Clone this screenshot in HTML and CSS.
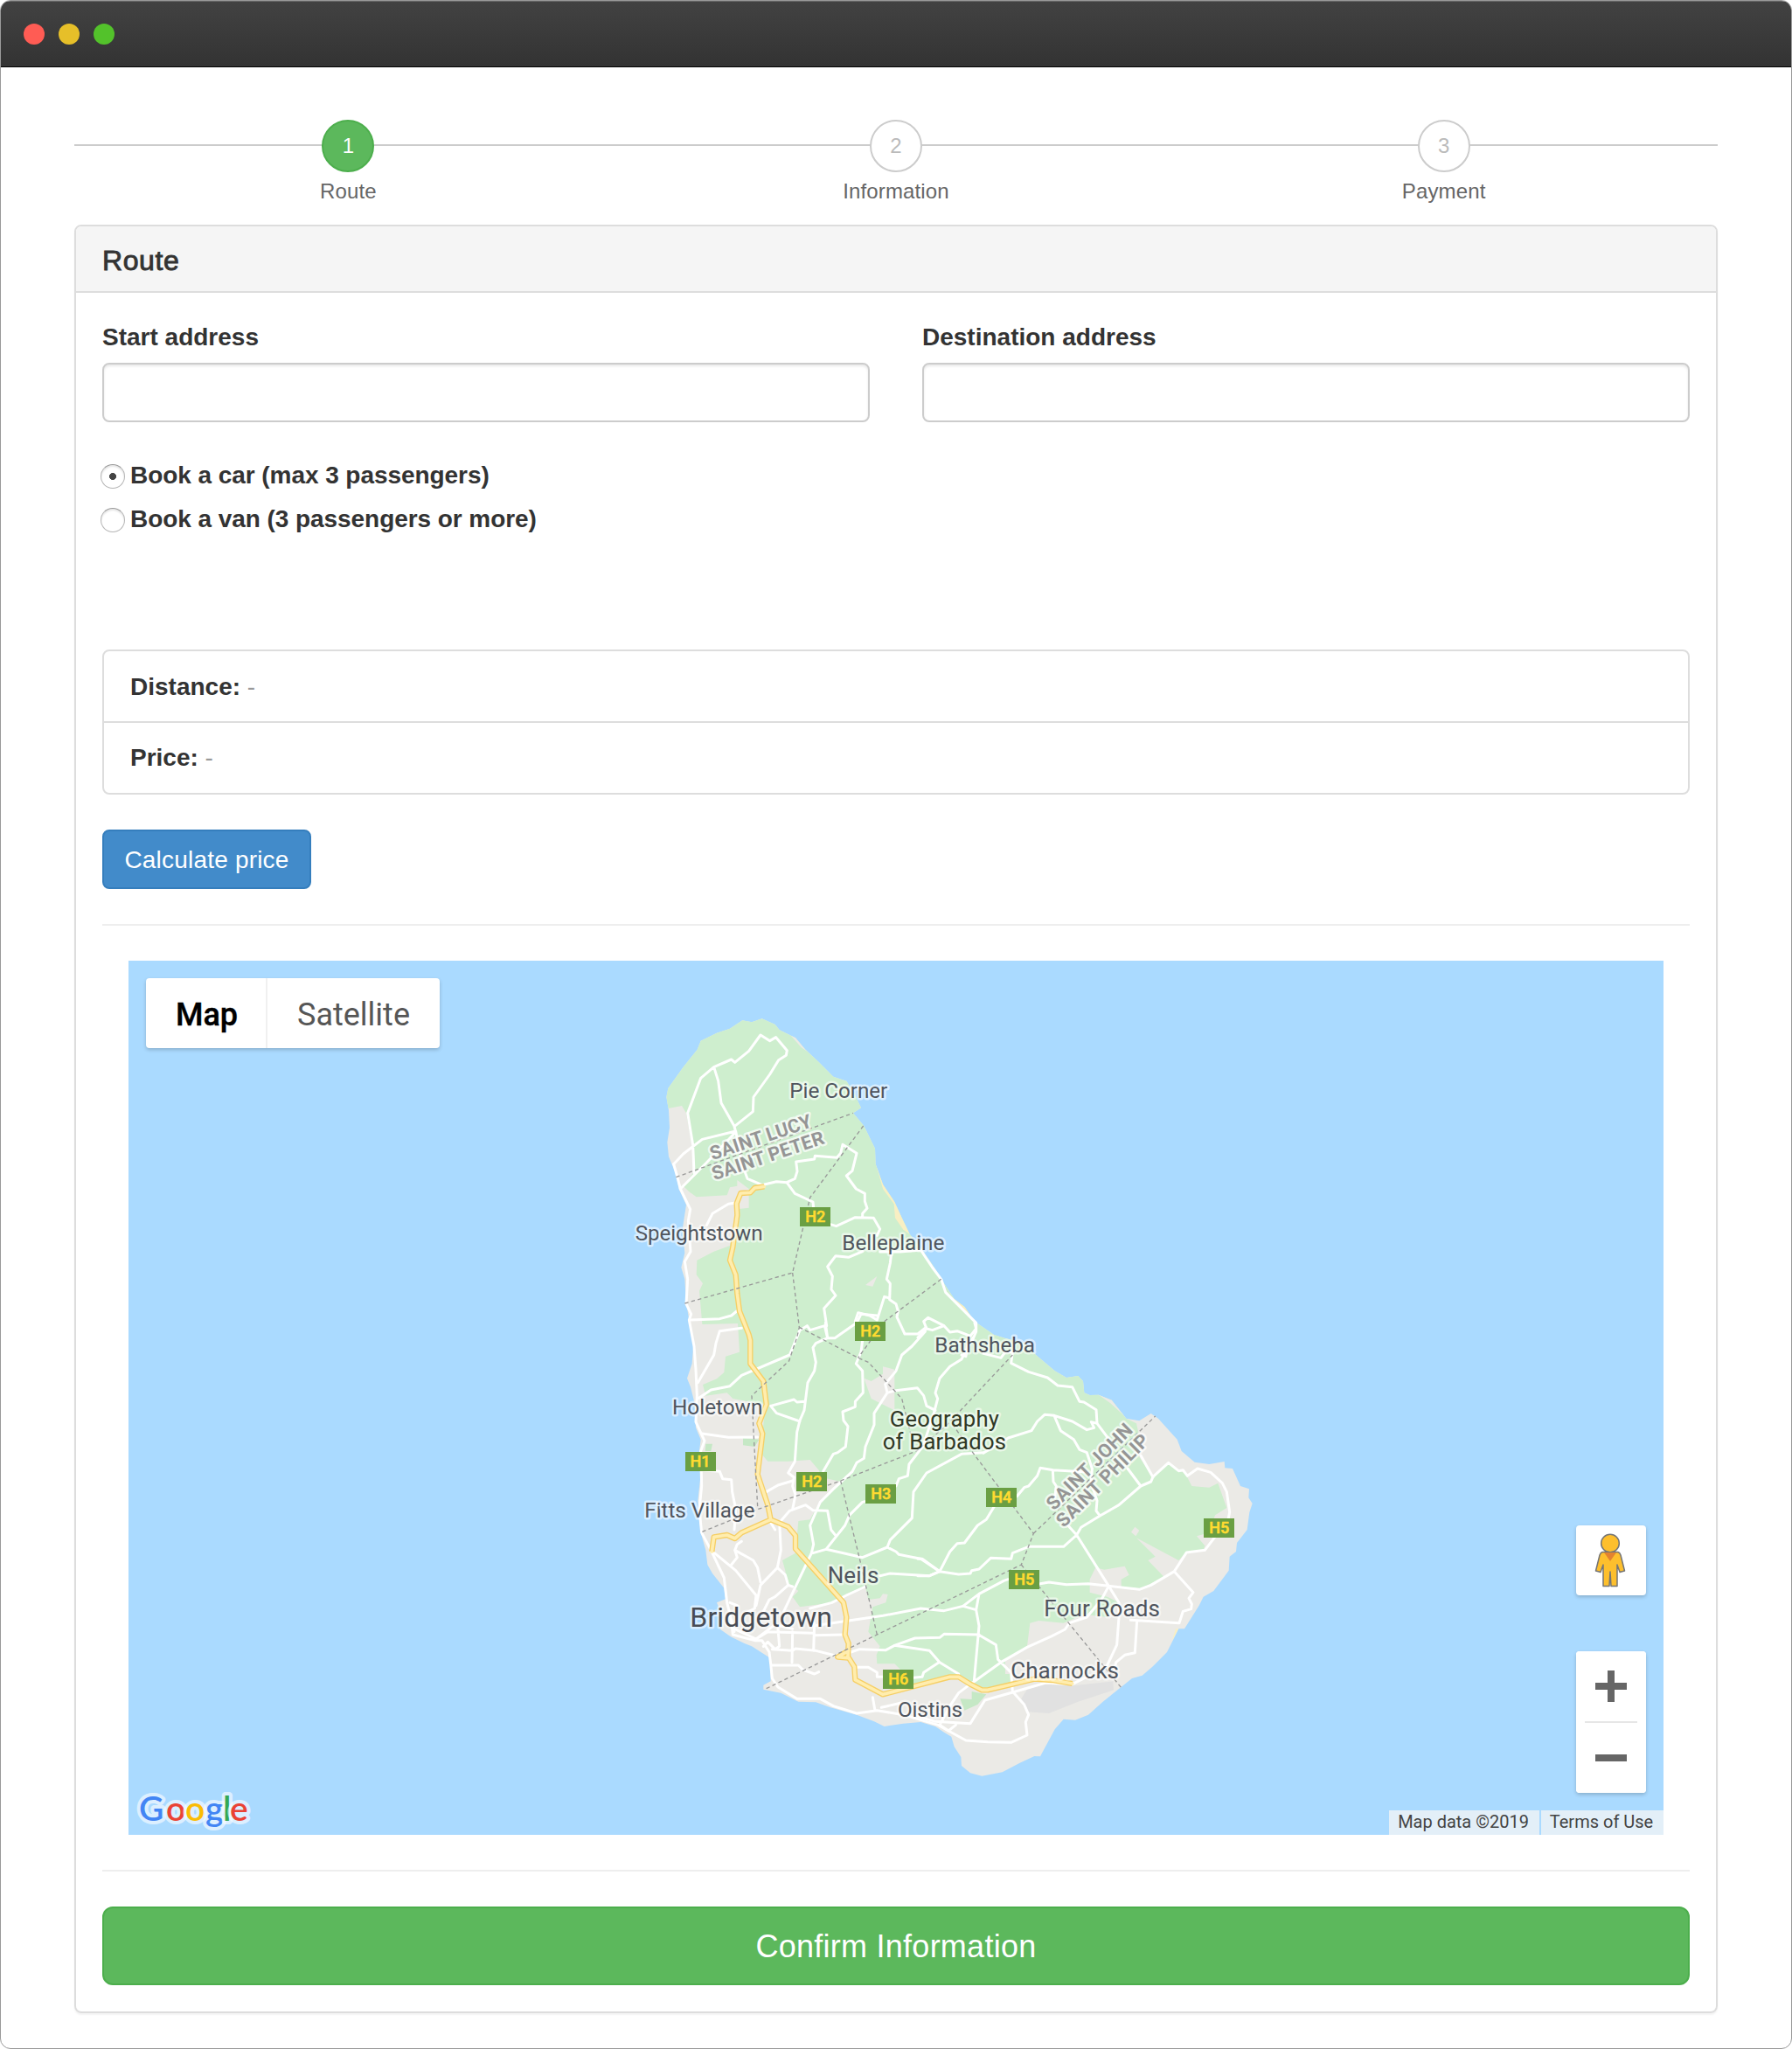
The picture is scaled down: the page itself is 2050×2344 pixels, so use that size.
FILE: index.html
```html
<!DOCTYPE html>
<html lang="en">
<head>
<meta charset="utf-8">
<title>Book a ride</title>
<link rel="stylesheet" href="styles.css">
</head>
<body>
<div class="window">
  <header class="titlebar"><span class="dot red"></span><span class="dot yellow"></span><span class="dot green"></span></header>
  <main class="content">
    <ol class="steps">
      <li class="step active"><span class="num">1</span><span class="step-label">Route</span></li>
      <li class="step"><span class="num">2</span><span class="step-label">Information</span></li>
      <li class="step"><span class="num">3</span><span class="step-label">Payment</span></li>
    </ol>
    <section class="panel">
      <h1 class="panel-heading">Route</h1>
      <div class="panel-body">
        <div class="addresses">
          <label class="field">Start address<input class="input" type="text"></label>
          <label class="field">Destination address<input class="input" type="text"></label>
        </div>
        <div class="choices">
          <label class="choice"><input class="radio" type="radio" name="vehicle" checked>Book a car (max 3 passengers)</label>
          <label class="choice"><input class="radio" type="radio" name="vehicle">Book a van (3 passengers or more)</label>
        </div>
        <ul class="summary">
          <li><b>Distance:</b> <span class="muted">-</span></li>
          <li><b>Price:</b> <span class="muted">-</span></li>
        </ul>
        <button class="btn primary" type="button">Calculate price</button>
        <hr class="rule">
        <div class="map">
          <svg class="map-canvas" viewBox="-1719 -93 5268 3000">
            <defs>
              <path id="land" d="M455 106 L500 126 515 145 570 172 604 212 650 255 700 305 745 320 770 360 795 412 768 430 805 474 843 552 845 605 870 675 910 735 935 790 962 845 1005 900 1040 950 1070 1000 1115 1068 1150 1095 1185 1145 1250 1190 1290 1203 1360 1220 1395 1260 1460 1315 1500 1338 1540 1332 1557 1350 1561 1390 1580 1398 1610 1397 1655 1415 1705 1478 1750 1486 1790 1461 1815 1478 1880 1550 1895 1590 1940 1628 1990 1635 2042 1626 2044 1648 2070 1650 2097 1710 2127 1720 2125 1750 2138 1770 2128 1800 2120 1860 2085 1905 2082 1935 2060 1952 2057 2000 2005 2070 1970 2090 1955 2120 1905 2200 1885 2200 1865 2240 1845 2280 1795 2330 1760 2360 1725 2370 1625 2450 1575 2495 1530 2513 1490 2510 1460 2545 1410 2638 1390 2637 1340 2660 1280 2692 1210 2705 1170 2695 1140 2670 1138 2640 1115 2605 1105 2570 1080 2555 1050 2535 1000 2520 940 2525 875 2535 840 2518 780 2495 690 2470 640 2452 580 2450 520 2420 460 2408 460 2393 485 2380 483 2300 420 2260 395 2250 350 2228 312 2202 320 2160 300 2110 330 2098 325 2060 285 2010 268 1980 262 1930 245 1870 235 1760 245 1670 240 1590 245 1550 228 1510 225 1430 210 1370 198 1340 215 1290 220 1220 205 1140 195 1080 190 1000 178 960 190 910 182 830 195 745 170 690 160 640 135 580 130 530 138 480 135 420 127 375 133 345 185 272 233 212 245 182 280 165 300 155 345 140 388 112 420 118Z"/>
              <clipPath id="shore"><use href="#land"/></clipPath>
              <path id="highway" d="M463 682 L430 687 415 703 382 705 368 740 370 780 355 890 345 935 365 985 370 1050 378 1110 410 1190 415 1210 415 1290 460 1350 470 1430 445 1495 457 1530 440 1670 475 1775 485 1825 545 1850 570 1880 570 1925 735 2110 745 2160 740 2220 752 2250 750 2295 772 2330 775 2375 870 2425 1100 2365 1130 2365 1170 2390 1210 2410 1230 2410 1315 2390 1390 2372 1450 2376 1520 2388 M485 1825 L385 1870 362 1890 335 1878 290 1885 283 1935 M752 2275 L715 2297 750 2300"/>
            </defs>
            <use href="#land" class="land"/>
            <g clip-path="url(#shore)">
              <path class="park" d="M455 60 L620 190 700 280 820 300 860 500 900 600 990 800 1120 980 1220 1130 1300 1180 1420 1250 1520 1310 1600 1380 1680 1420 1705 1478 1740 1495 1750 1540 1750 1610 1790 1670 1797 1680 1850 1630 1910 1670 1930 1710 1990 1715 2020 1700 2050 1785 2010 1810 1990 1870 1947 1882 1975 1915 1970 1930 1910 1938 1885 1965 1740 1888 1805 1952 1780 1965 1835 2022 1750 2065 1688 2060 1688 2030 1715 2015 1700 1985 1630 1997 1600 1990 1580 2030 1580 2075 1640 2090 1680 2110 1640 2160 1560 2150 1490 2180 1405 2172 1375 2180 1365 2260 1290 2310 1290 2355 1315 2355 1315 2385 1210 2410 1110 2360 980 2395 940 2350 910 2320 850 2320 848 2290 860 2260 820 2210 835 2125 880 2110 887 2082 870 2080 860 2095 820 2100 810 2055 745 2080 700 2110 585 2125 560 2090 580 2070 540 2040 535 2000 525 1965 570 1940 580 1830 620 1825 655 1760 725 1695 660 1680 650 1655 620 1620 545 1625 475 1625 445 1590 460 1500 465 1430 355 1410 335 1390 262 1400 252 1362 300 1342 325 1320 330 1265 378 1250 372 1152 250 1155 240 1040 252 1015 230 985 232 935 290 905 345 885 370 760 410 755 410 690 370 660 370 680 345 685 335 712 230 718 205 700 185 680 222 630 218 560 195 430 180 405 100 420 60 300 300 60Z"/>
              <path class="land" d="M870 1300 L910 1310 910 1450 830 1410 805 1340 830 1350 870 1325Z M1735 1850 L1750 1862 1738 1882 1722 1868Z M555 165 L600 170 620 225 590 205Z M1600 1390 L1660 1400 1710 1480 1650 1425Z M810 1020 L850 990 835 1025Z"/>
              <path class="golf" d="M1175 2415 L1225 2425 1195 2460 1150 2480 1135 2440 1175 2442Z M390 1545 L445 1550 430 1575 390 1570Z M262 1565 L285 1565 280 1590 260 1590Z"/>
              <path class="airport" d="M1370 2400 L1420 2390 1525 2395 1660 2380 1662 2410 1540 2450 1440 2490 1365 2485 1345 2440Z"/>
              <path class="beach" d="M846 605 L880 670 910 730 962 845 940 830 912 790 908 742 870 690Z M1115 1068 L1160 1095 1190 1150 1150 1115Z M1862 2240 L1885 2200 1875 2200Z"/>
            </g>
            <g class="roads">
              <path d="M463 675 L505 665 540 668 568 655 576 630 572 597 635 588 637 577 712 583 725 568 732 538 780 568 765 628 745 645 778 690 808 706 808 733 816 757 800 775 800 788 M175 690 L265 600 365 495 360 475 315 395 305 320 290 272 350 246 362 256 410 217 450 162 482 182 503 170 541 215 538 232 512 248 482 297 426 375 424 425 365 472 M290 272 L245 310 200 430 218 540 222 635 M152 605 L185 570 250 520 365 492 380 570 385 600 405 655 463 680 M265 815 L285 775 340 742 365 738 M540 668 L568 706 630 735 632 755 M690 812 L710 818 775 788 838 790 860 828 850 850 M800 905 L752 925 708 920 680 957 697 990 693 1035 708 1056 668 1100 677 1160 M900 905 L895 945 883 1000 895 1015 893 1070 915 1085 922 1110 918 1130 945 1188 990 1188 1018 1165 M893 1065 L875 1060 850 1140 825 1125 785 1115 775 1145 M860 906 L930 906 1000 900 1040 960 1070 1000 1085 1045 1190 1150 1190 1180 1175 1215 M210 1140 L310 1136 350 1125 368 1110"/>
              <path d="M152 605 L162 640 175 690 209 760 202 800 210 905 190 940 200 1000 195 1085 212 1120 205 1140 222 1230 228 1310 232 1400 228 1490 258 1555 245 1590 248 1710 240 1790 248 1870 280 1930 325 2025 335 2110 360 2210"/>
              <path transform="translate(0 1110)" d="M235 245 L290 150 297 110 310 68 385 58 M235 300 L280 270 345 257 385 220 550 150 585 65 610 50 620 65 670 50 680 92 705 92 780 40 795 10 850 15 M673 40 L680 92 640 110 630 125 640 175 635 205 612 245 600 340 585 375 575 415 568 515 545 555 565 570 560 600 570 630 560 680 M485 325 L565 303 575 312 600 310 M485 325 L505 350 585 378 M800 100 L795 140 778 180 800 205 802 280 775 310 775 328 732 345 735 375 750 395 742 465 715 485 700 490 665 550 M1015 70 L970 120 935 150 915 205 878 250 885 280 840 350 840 390 810 465 805 505 780 520 765 550 700 610 655 655 620 735 632 800 625 830 530 1030 M885 280 L915 272 988 263 1010 290 1020 325 1050 340 M1180 90 L1150 145 1140 165 1100 190 1065 230 1050 280 1058 300 1045 350 1015 440 1010 460 960 525 955 565 925 575 915 600 M1215 485 L1140 490 1020 555 975 620 970 710 895 785 885 810 800 845 675 817 630 830 M820 650 L800 655 755 700 740 735 675 817 M515 725 L550 685 605 665 630 683 680 685 692 750 708 770 M885 810 L915 825 925 835 1000 850 1065 893 M860 908 L895 900 1030 908 1065 893 M620 1020 L695 1000 745 975 810 945 M630 1080 L870 1045 1000 1020 1080 1028 1145 1012 M485 725 L500 750 M515 725 L520 820 508 880 450 940 435 1010 M470 620 L510 597 560 582 M250 420 L340 433 440 432 M245 545 L310 550 320 575 350 578 353 620 365 680 360 750 M350 870 L370 845 362 820 370 800 385 790 M362 820 L425 855 440 880 450 930 M280 820 L365 890 435 975 430 1020 390 1040 M508 880 L535 905 545 940 560 945 M545 940 L500 980 480 990 460 1030"/>
              <path transform="translate(0 1110)" d="M345 1000 L370 1010 M350 1060 L355 1110 430 1130 455 1130 480 1170 485 1210 490 1260 510 1290 575 1330 655 1330 700 1355 780 1380 850 1370 940 1385 1060 1420 1095 1440 M360 1090 L435 1125 475 1100 630 1105 M435 1125 L500 1075 560 1090 M635 1112 L735 1110 M510 1090 L515 1150 500 1160 475 1135 460 1150 M560 1100 L558 1205 M635 1070 L632 1165 M490 1160 L560 1165 570 1158 640 1165 720 1185 M490 1215 L580 1215 595 1230 635 1245 650 1238 M760 1170 L790 1160 880 1163 910 1147 980 1122 1065 1120 1080 1108 1200 1110 M910 1147 L1030 1165 1065 1205 1130 1245 M1060 1207 L1010 1240 1005 1255 975 1258 M780 1222 L820 1222 850 1240 850 1255 870 1255 M835 1325 L843 1370 M865 1360 L930 1345"/>
              <path transform="translate(990 660)" d="M0 540 L30 510 20 485 35 472 90 500 110 522 135 518 180 535 200 510 195 490 M30 510 L50 515 90 500 M170 565 L165 605 150 600 M225 595 L285 610 300 590 325 590 320 628 380 658 445 678 480 705 530 710 555 760 570 762 612 788 615 835 660 895 M225 937 L310 885 390 860 410 828 435 805 468 808 490 860 535 890 555 925 580 935 598 990 M468 808 L530 828 580 857 605 850 595 830 615 835"/>
              <path transform="translate(990 1560)" d="M340 185 L365 155 380 150 410 115 420 88 465 95 580 102 M463 95 L465 135 475 150 470 190 M598 90 L595 140 615 200 612 235 625 252 M720 90 L765 150 M765 45 L807 120 M265 215 L235 265 205 285 160 345 135 347 110 375 75 443 15 400 0 400 M0 458 L40 458 75 443 140 453 180 450 185 440 210 435 250 397 320 400 325 380 380 358 500 358 545 318 560 292 625 252 690 215 765 150 800 135 807 118 860 70 895 98 910 95 925 115 960 90 1005 103 1045 140 1060 170 1070 240 1065 265 985 370 922 378 880 443 800 490 760 505 655 493 585 485 510 488 450 480 420 485 M515 285 L545 318 655 493 690 550 690 600 683 695 650 765 M655 493 L630 540 580 600 520 620 505 642 460 665 375 703 285 755 180 830 140 860 110 905 75 970 M310 470 L295 475 210 520 155 562 M210 520 L200 575 210 630 193 820 M155 562 L200 575 M208 660 L268 695 275 745 320 790 325 855 365 900 380 935 370 960 375 1005 320 1030 240 1028 165 1023 105 990 75 970 M880 443 L945 515 930 535 940 555 938 572 910 580 897 620 730 610 M752 612 L745 722 710 730 680 755 675 780 M0 940 L60 958 180 965 230 885 325 858 440 825 530 830 590 800 M105 990 L130 970"/>
            </g>
            <use href="#highway" class="casing"/>
            <use href="#highway" class="core"/>
            <path class="parish" d="M160 650 L768 430 M803 474 L620 720 560 978 190 1083 M560 978 L583 1165 575 1200 548 1280 420 1400 428 1560 440 1780 M1070 1000 L875 1145 785 1270 M583 1165 L785 1270 820 1285 935 1410 965 1530 M250 1867 L440 1790 725 1692 985 1590 1090 1500 1315 1260 M725 1692 L795 1980 850 2220 M470 2405 L850 2220 1345 1980 1387 1873 1180 1597 1110 1500 M1387 1873 L1805 1470 M1345 1980 L1688 2402"/>
            <g class="shields">
              <path d="M585 753h105v66h-105z M774 1146h105v66h-105z M192 1593h105v66h-105z M573 1662h105v66h-105z M810 1704h105v66h-105z M870 2340h105v66h-105z M1224 1716h105v66h-105z M1302 1998h105v66h-105z M1971 1821h105v66h-105z"/>
              <text x="638" y="804">H2</text><text x="827" y="1197">H2</text><text x="243" y="1644">H1</text><text x="626" y="1713">H2</text><text x="863" y="1755">H3</text><text x="923" y="2391">H6</text><text x="1277" y="1767">H4</text><text x="1355" y="2049">H5</text><text x="2024" y="1872">H5</text>
            </g>
            <g class="places">
              <text x="550" y="377" textLength="336">Pie Corner</text>
              <text x="20" y="866" textLength="438">Speightstown</text>
              <text x="730" y="900" textLength="351">Belleplaine</text>
              <text x="1048" y="1250" textLength="344">Bathsheba</text>
              <text x="147" y="1463" textLength="310">Holetown</text>
              <text x="52" y="1817" textLength="378">Fitts Village</text>
              <text x="921" y="2503" textLength="222">Oistins</text>
              <text class="town" x="680" y="2044" textLength="176">Neils</text>
              <text class="town" x="1423" y="2158" textLength="398">Four Roads</text>
              <text class="town" x="1309" y="2369" textLength="371">Charnocks</text>
              <text class="city" x="208" y="2193" textLength="488">Bridgetown</text>
              <text class="geo" x="893" y="1505" textLength="376">Geography</text>
              <text class="geo" x="869" y="1583" textLength="424">of Barbados</text>
              <g class="region">
                <text transform="translate(285 592) rotate(-18.5)" textLength="364">SAINT LUCY</text>
                <text transform="translate(292 661) rotate(-18.5)" textLength="402">SAINT PETER</text>
                <text transform="translate(1457 1796) rotate(-45)" textLength="388">SAINT JOHN</text>
                <text transform="translate(1491 1855) rotate(-45)" textLength="420">SAINT PHILIP</text>
              </g>
            </g>
          </svg>
          <div class="map-types"><button class="map-type selected" type="button">Map</button><button class="map-type" type="button">Satellite</button></div>
          <svg class="brand" viewBox="0 0 140 58"><text y="38"><tspan x="6" fill="#4285f4">G</tspan><tspan x="37" fill="#ea4335">o</tspan><tspan x="59" fill="#fbbc05">o</tspan><tspan x="82" fill="#4285f4">g</tspan><tspan x="102" fill="#34a853">l</tspan><tspan x="110" fill="#ea4335">e</tspan></text></svg>
          <div class="map-controls">
            <button class="map-btn pegman" type="button" aria-label="Street View"><svg width="36" height="62" viewBox="0 0 36 62"><g fill="#fdbf2d" stroke="#757575" stroke-width="1.5" stroke-linejoin="round"><path d="M9 21.500 H27 Q29 22 30 25 L34.500 43 L29 44.500 L26 36 V60.500 H19 L18 44 L17 60.500 H10 V36 L7 44.500 L1.500 43 L6 25 Q7 22 9 21.500Z"/><circle cx="18" cy="11.500" r="10.300"/></g><path fill="#e28230" d="M11 22h14l-7 10z"/></svg></button>
            <div class="zoom"><button class="map-btn flat" type="button" aria-label="Zoom in"><svg width="36" height="36" viewBox="0 0 36 36"><path fill="#666" d="M14 0h8v14h14v8H22v14h-8V22H0v-8h14z"/></svg></button><span class="zoom-line"></span><button class="map-btn flat" type="button" aria-label="Zoom out"><svg width="36" height="8" viewBox="0 0 36 8"><path fill="#666" d="M0 0h36v8H0z"/></svg></button></div>
          </div>
          <div class="attribution"><span class="copyright">Map data ©2019</span><span class="terms">Terms of Use</span></div>
        </div>
        <hr class="rule">
        <button class="btn success" type="button">Confirm Information</button>
      </div>
    </section>
  </main>
</div>
</body>
</html>
```
FILE: styles.css
```css
* { box-sizing: border-box; }
body { margin: 0; background: #fff; color: #333; font: 28px/40px "Liberation Sans", Arial, sans-serif; }
button { font: inherit; margin: 0; padding: 0; border: 0; cursor: pointer; }
.window { height: 2344px; border: 1px solid #9a9a9a; border-radius: 12px; overflow: hidden; background: #fff; }
.titlebar { height: 76px; padding: 0 26px; display: flex; align-items: center; gap: 16px; background: linear-gradient(#424242, #333); border-top: 1px solid #666; border-bottom: 1px solid #000; }
.dot { width: 24px; height: 24px; border-radius: 50%; }
.dot.red { background: #ff5c54; }
.dot.yellow { background: #e6bf29; }
.dot.green { background: #53c22b; }
.content { padding: 60px 84px 0; }

.steps { list-style: none; margin: 0; padding: 0; height: 120px; display: grid; grid-template-columns: repeat(3, 1fr); background: linear-gradient(#ccc, #ccc) 0 28px / 100% 2px no-repeat; }
.step { display: flex; flex-direction: column; align-items: center; font-size: 24px; line-height: 30px; color: #666; }
.num { width: 60px; height: 60px; border: 2px solid #ccc; border-radius: 50%; background: #fff; color: #bbb; text-align: center; line-height: 56px; }
.active .num { background: #5cb85c; border-color: #4cae4c; color: #fff; }
.step-label { margin-top: 7px; letter-spacing: .15px; }

.panel { height: 2046px; border: 2px solid #ddd; border-radius: 8px; box-shadow: 0 2px 2px rgba(0, 0, 0, .05); overflow: hidden; }
.panel-heading { margin: 0; height: 76px; padding: 0 30px; background: #f5f5f5; border-bottom: 2px solid #ddd; font-size: 32px; font-weight: 400; letter-spacing: .6px; line-height: 78px; -webkit-text-stroke: .9px #333; }
.panel-body { padding: 31px 30px 30px; display: flex; flex-direction: column; }
.addresses { display: grid; grid-template-columns: 1fr 1fr; gap: 60px; }
.field { display: flex; flex-direction: column; gap: 9px; font-weight: 700; }
.input { height: 68px; width: 100%; border: 2px solid #ccc; border-radius: 8px; background: #fff; box-shadow: inset 0 2px 3px rgba(0, 0, 0, .09); }
.choices { margin-top: 41px; height: 219px; display: flex; flex-direction: column; gap: 10px; }
.choice { height: 40px; display: flex; align-items: center; gap: 6px; font-weight: 700; letter-spacing: -.06px; margin-left: -2px; }
.radio { appearance: none; margin: 2px 0 0; width: 28px; height: 28px; border: 1.500px solid #b5b5b5; border-top-color: #999; border-radius: 50%; background: #fff; box-shadow: inset 0 2px 2px rgba(0, 0, 0, .1); }
.radio:checked { background: radial-gradient(circle, #444 0 3.700px, #fff 4.300px); }
.summary { list-style: none; margin: 0; padding: 0; border: 2px solid #ddd; border-radius: 8px; }
.summary li { height: 80px; padding: 0 30px; line-height: 81px; }
.summary li + li { height: 82px; line-height: 79px; border-top: 2px solid #ddd; }
.muted { color: #999; }
.btn { color: #fff; border-radius: 8px; }
.primary { align-self: flex-start; margin-top: 40px; width: 239px; height: 68px; padding-top: 1px; background: #428bca; border: 2px solid #357ebd; letter-spacing: .2px; }
.rule { width: 100%; margin: 40px 0; border: 0; height: 2px; background: #eee; }
.success { height: 90px; padding-top: 2px; background: #5cb85c; border: 2px solid #4cae4c; border-radius: 12px; font-size: 36px; letter-spacing: .25px; }

.map { position: relative; margin: 0 30px; height: 1000px; background: #aadaff; font-family: Roboto, sans-serif; }
.map-canvas { display: block; width: 1756px; height: 1000px; }
.land { fill: #ebeae6; }
.park { fill: #ceeece; }
.golf { fill: #c5e8c5; }
.airport { fill: #e1e1e1; }
.beach { fill: #f8efc3; }
.roads, .casing, .core, .parish { fill: none; stroke-linejoin: round; stroke-linecap: round; }
.roads { stroke: #fff; stroke-width: 9; }
.casing { stroke: #f6cf65; stroke-width: 19; stroke-linecap: butt; }
.core { stroke: #ffedae; stroke-width: 11; }
.parish { stroke: #999; stroke-width: 4; stroke-linecap: butt; stroke-dasharray: 13 10; }
.shields path { fill: #6a9f43; }
.shields text { fill: #ffdb31; font-size: 54px; font-weight: 500; text-anchor: middle; stroke: #ffdb31; stroke-width: 1.500; }
.places text { fill: #50555e; stroke: rgba(255, 255, 255, .55); stroke-width: 15; stroke-linejoin: round; paint-order: stroke; font-size: 73px; }
.places .town { font-size: 78px; }
.places .city { font-size: 96px; fill: #484c54; }
.places .geo { font-size: 77px; fill: #303825; }
.places .region text { fill: #959595; font-size: 65px; font-weight: 700; stroke: rgba(255, 255, 255, .7); }

.map-types { position: absolute; left: 20px; top: 20px; height: 80px; display: flex; border-radius: 4px; background: #fff; box-shadow: 0 2px 4px rgba(0, 0, 0, .2); }
.map-type { width: 197px; padding-top: 3px; background: transparent; color: #565656; font-size: 36px; }
.map-type.selected { width: 139px; padding-left: 2px; color: #000; font-weight: 500; border-right: 2px solid #f0f0f0; -webkit-text-stroke: .4px #000; }
.brand { position: absolute; left: 6px; top: 946px; width: 140px; height: 58px; overflow: visible; }
.brand text { font: 600 39px/1 Lato, sans-serif; stroke: rgba(255, 255, 255, .6); stroke-width: 8; stroke-linejoin: round; paint-order: stroke; }
.map-controls { position: absolute; right: 20px; top: 646px; display: flex; flex-direction: column; gap: 64px; }
.map-btn { width: 80px; height: 80px; display: flex; align-items: center; justify-content: center; background: #fff; border-radius: 4px; box-shadow: 0 2px 4px rgba(0, 0, 0, .2); }
.map-btn.pegman { padding-right: 2px; }
.map-btn.flat { box-shadow: none; }
.zoom { height: 162px; display: flex; flex-direction: column; background: #fff; border-radius: 4px; box-shadow: 0 2px 4px rgba(0, 0, 0, .2); }
.zoom-line { height: 2px; margin: 0 10px; background: #e6e6e6; }
.attribution { position: absolute; right: 0; bottom: 0; display: flex; gap: 2px; height: 28px; color: #444; font-size: 20px; line-height: 27px; text-align: center; }
.copyright { width: 172px; padding-right: 2px; background: rgba(245, 245, 245, .75); }
.terms { width: 140px; padding-right: 2px; background: rgba(245, 245, 245, .75); }
```
